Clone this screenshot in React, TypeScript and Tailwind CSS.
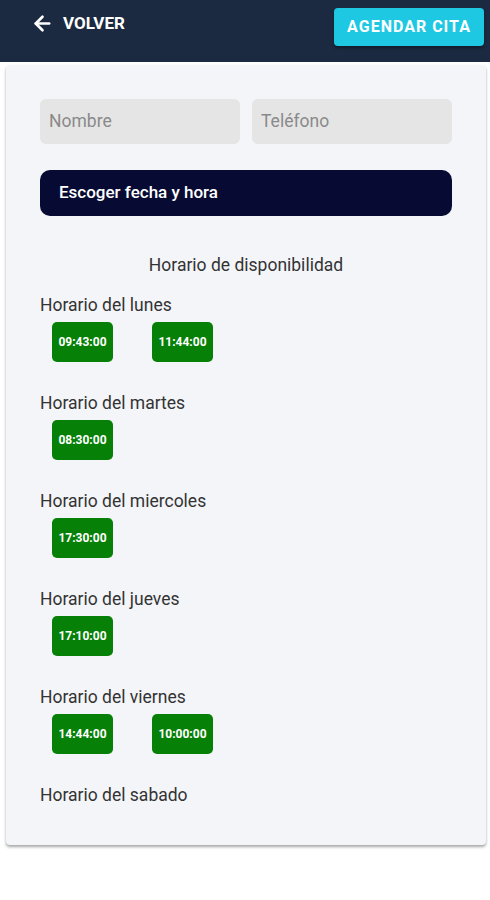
import { ArrowLeft } from 'lucide-react'

const schedule = [
    { day: 'lunes', times: ['09:43:00', '11:44:00'] },
    { day: 'martes', times: ['08:30:00'] },
    { day: 'miercoles', times: ['17:30:00'] },
    { day: 'jueves', times: ['17:10:00'] },
    { day: 'viernes', times: ['14:44:00', '10:00:00'] },
    { day: 'sabado', times: [] as string[] },
]

const App = () => {
    return (
        <div className="min-h-[900px] w-[490px] bg-white font-['Roboto',sans-serif]">
            <header className="flex h-[62px] items-start justify-between bg-[#1b2a40] pl-[31px] pr-[6px] pt-[8px]">
                <button className="mt-[3px] flex items-center gap-[9px] text-white">
                    <ArrowLeft className="h-[23px] w-[23px]" strokeWidth={2.8} />
                    <span className="text-[17px] font-bold">VOLVER</span>
                </button>
                <button className="h-[38px] w-[150px] rounded-[4px] bg-[#1ec8e3] text-[16px] font-bold tracking-[1px] text-white shadow-[0_2px_3px_rgba(0,0,0,0.35)]">
                    AGENDAR CITA
                </button>
            </header>

            <div className="ml-[6px] mt-[3px] w-[480px] rounded-[4px] bg-[#f4f5f9] px-[34px] pb-[40px] pt-[34px] shadow-[0_2px_3px_rgba(0,0,0,0.35)]">
                <div className="flex gap-[12px]">
                    <div className="flex h-[45px] flex-1 items-center rounded-[6px] bg-[#e5e5e5] px-[9px] text-[17.5px] text-[#8a8a8a]">
                        Nombre
                    </div>
                    <div className="flex h-[45px] flex-1 items-center rounded-[6px] bg-[#e5e5e5] px-[9px] text-[17.5px] text-[#8a8a8a]">
                        Teléfono
                    </div>
                </div>

                <button className="mt-[26px] flex h-[46px] w-full items-center rounded-[10px] bg-[#070b33] pl-[19px] text-[17px] font-medium text-white">
                    Escoger fecha y hora
                </button>

                <div className="mt-[38px] text-center text-[17.5px] leading-[22px] text-[#333]">Horario de disponibilidad</div>

                <div className="mt-[19px] flex flex-col gap-[31px]">
                    {schedule.map((s) => (
                        <div key={s.day}>
                            <div className="h-[20px] text-[17.5px] leading-[20px] text-[#333]">Horario del {s.day}</div>
                            {s.times.length > 0 && (
                                <div className="mt-[7px] flex gap-[39px] pl-[12px]">
                                    {s.times.map((t) => (
                                        <div
                                            key={t}
                                            className="flex h-[40px] w-[61px] items-center justify-center rounded-[5px] bg-[#078007] text-[12px] font-bold text-white"
                                        >
                                            {t}
                                        </div>
                                    ))}
                                </div>
                            )}
                        </div>
                    ))}
                </div>
            </div>
        </div>
    )
}

export default App
